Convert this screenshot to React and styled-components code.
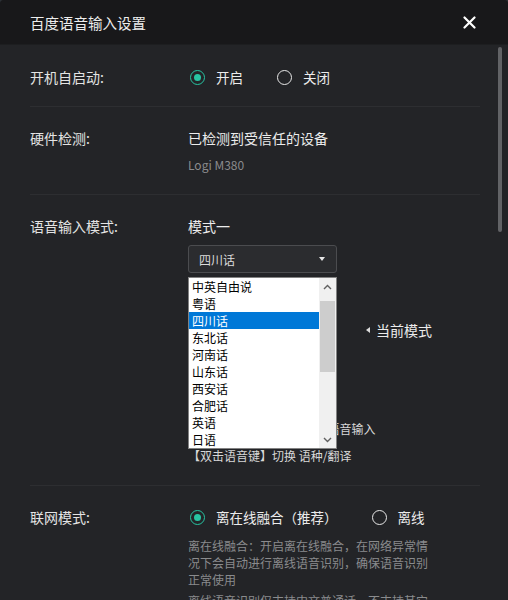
import styled, { createGlobalStyle } from "styled-components";

const GlobalStyle = createGlobalStyle`
  html, body {
    margin: 0;
    padding: 0;
    background: #2b3035;
  }
  body {
    font-family: "Noto Sans CJK SC", "Noto Sans", sans-serif;
  }
`;

const Window = styled.div`
  position: relative;
  width: 508px;
  height: 600px;
  background: #232427;
  border-radius: 4px 4px 0 0;
  overflow: hidden;
  display: flex;
  flex-direction: column;
`;

const TitleBar = styled.div`
  flex-shrink: 0;
  height: 45px;
  box-sizing: border-box;
  padding: 0 32px 0 30px;
  display: flex;
  align-items: center;
  justify-content: space-between;
  background: #18181a;
  border-bottom: 1px solid #1d1e20;
  color: #ededed;
  font-size: 14.5px;
`;

const CloseButton = styled.button`
  border: 0;
  padding: 0;
  background: none;
  display: flex;
  cursor: pointer;
`;

const Content = styled.div`
  position: relative;
  padding: 0 28px 0 30px;
`;

const ScrollThumb = styled.div`
  position: absolute;
  right: 6px;
  top: 2px;
  width: 4px;
  height: 185px;
  border-radius: 2px;
  background: #626366;
`;

const Section = styled.div`
  display: grid;
  grid-template-columns: 158px 1fr;
  padding: ${(p) => p.$top || 21}px 0 19px;
  border-bottom: ${(p) => (p.$last ? "none" : "1px solid #2d2e31")};
`;

const Label = styled.div`
  font-size: 14px;
  line-height: 20px;
  color: #e4e4e4;
`;

const Value = styled.div`
  display: flex;
  flex-direction: column;
  align-items: flex-start;
`;

const MainText = styled.div`
  font-size: 14px;
  line-height: 20px;
  color: #ececec;
`;

const SubText = styled.div`
  font-size: 12px;
  line-height: 20px;
  margin-top: 7px;
  color: #8a8b8d;
`;

const RadioGroup = styled.div`
  display: flex;
  align-items: center;
  gap: 32px;
  height: 20px;
`;

const Option = styled.label`
  display: flex;
  align-items: center;
  gap: 11px;
  font-size: 13.5px;
  line-height: 20px;
  color: #ececec;
`;

const Circle = styled.span`
  box-sizing: border-box;
  width: 15px;
  height: 15px;
  margin-left: 2px;
  border-radius: 50%;
  border: 1.5px solid ${(p) => (p.$on ? "#27c4a2" : "#e8e8e8")};
  display: flex;
  align-items: center;
  justify-content: center;

  &::after {
    content: "";
    width: 7px;
    height: 7px;
    border-radius: 50%;
    background: ${(p) => (p.$on ? "#27c4a2" : "transparent")};
  }
`;

const SelectWrap = styled.div`
  position: relative;
  display: flex;
  align-items: center;
  margin-top: ${(p) => p.$gap || 0}px;
`;

const Select = styled.div`
  box-sizing: border-box;
  width: 149px;
  height: 28px;
  padding: 0 10px;
  display: flex;
  align-items: center;
  justify-content: space-between;
  background: #2b2c2f;
  border: 1px solid #4b4c4f;
  border-radius: 3px;
  font-size: 12px;
  color: #dcdcdc;
`;

const Caret = styled.span`
  width: 0;
  height: 0;
  margin-right: 1px;
  border-left: 3px solid transparent;
  border-right: 3px solid transparent;
  border-top: 4px solid #e6e6e6;
`;

const CurrentTag = styled.span`
  display: flex;
  align-items: center;
  gap: 6px;
  margin-left: 29px;
  font-size: 14px;
  color: #ececec;

  &::before {
    content: "";
    border-top: 3px solid transparent;
    border-bottom: 3px solid transparent;
    border-right: 4px solid #dcdcdc;
  }
`;

const ModeTitle = styled(MainText)`
  margin-top: ${(p) => p.$gap || 0}px;
`;

const Hints = styled.div`
  display: flex;
  flex-direction: column;
  gap: 7px;
  margin-top: 75px;
`;

const Hint = styled.div`
  font-size: 12px;
  line-height: 20px;
  color: #d8d8d8;
  white-space: nowrap;
`;

const ListBox = styled.div`
  position: absolute;
  left: 0;
  top: 32px;
  z-index: 5;
  box-sizing: border-box;
  width: 149px;
  height: 172px;
  display: flex;
  background: #ffffff;
  border: 1px solid #828282;
`;

const Items = styled.div`
  flex: 1;
  display: flex;
  flex-direction: column;
`;

const Item = styled.div`
  height: 17px;
  line-height: 17px;
  padding-left: 3px;
  font-size: 12px;
  color: ${(p) => (p.$active ? "#ffffff" : "#000000")};
  background: ${(p) => (p.$active ? "#0078d7" : "transparent")};
`;

const ListScroll = styled.div`
  width: 17px;
  display: flex;
  flex-direction: column;
  align-items: center;
  background: #f0f0f0;
`;

const ScrollArrow = styled.div`
  height: 17px;
  display: flex;
  align-items: center;
  justify-content: center;
`;

const ListThumb = styled.div`
  width: 15px;
  height: 71px;
  margin-top: 6px;
  background: #cdcdcd;
`;

const Track = styled.div`
  flex: 1;
`;

const Desc = styled.div`
  width: 246px;
  margin-top: ${(p) => p.$gap}px;
  font-size: 12px;
  line-height: 17px;
  color: #8a8b8d;
`;

const Chevron = ({ up }) => (
  <svg width="9" height="6" viewBox="0 0 9 6">
    <path
      d={up ? "M1 5 L4.5 1.5 L8 5" : "M1 1 L4.5 4.5 L8 1"}
      fill="none"
      stroke="#606060"
      strokeWidth="1.4"
    />
  </svg>
);

const Radio = ({ on, children }) => (
  <Option>
    <Circle $on={on} />
    {children}
  </Option>
);

const dialects = ["中英自由说", "粤语", "四川话", "东北话", "河南话", "山东话", "西安话", "合肥话", "英语", "日语"];

export default function App() {
  return (
    <Window>
      <GlobalStyle />
      <TitleBar>
        <span>百度语音输入设置</span>
        <CloseButton aria-label="关闭">
          <svg width="13" height="13" viewBox="0 0 13 13">
            <path d="M1.5 1.5 L11.5 11.5 M11.5 1.5 L1.5 11.5" stroke="#ffffff" strokeWidth="2.2" strokeLinecap="round" />
          </svg>
        </CloseButton>
      </TitleBar>
      <Content>
        <ScrollThumb />
        <Section $top={22}>
          <Label>开机自启动:</Label>
          <RadioGroup>
            <Radio on>开启</Radio>
            <Radio>关闭</Radio>
          </RadioGroup>
        </Section>

        <Section>
          <Label>硬件检测:</Label>
          <Value>
            <MainText>已检测到受信任的设备</MainText>
            <SubText>Logi M380</SubText>
          </Value>
        </Section>

        <Section>
          <Label>语音输入模式:</Label>
          <Value>
            <ModeTitle>模式一</ModeTitle>
            <SelectWrap $gap={9}>
              <Select>
                四川话
                <Caret />
              </Select>
              <ListBox>
                <Items>
                  {dialects.map((d) => (
                    <Item key={d} $active={d === "四川话"}>
                      {d}
                    </Item>
                  ))}
                </Items>
                <ListScroll>
                  <ScrollArrow>
                    <Chevron up />
                  </ScrollArrow>
                  <ListThumb />
                  <Track />
                  <ScrollArrow>
                    <Chevron />
                  </ScrollArrow>
                </ListScroll>
              </ListBox>
            </SelectWrap>
            <ModeTitle $gap={14}>模式二</ModeTitle>
            <SelectWrap $gap={9}>
              <Select>
                中英自由说
                <Caret />
              </Select>
              <CurrentTag>当前模式</CurrentTag>
            </SelectWrap>
            <Hints>
              <Hint>【单击语音键】开始/结束 语音输入</Hint>
              <Hint>【双击语音键】切换 语种/翻译</Hint>
            </Hints>
          </Value>
        </Section>

        <Section $last>
          <Label>联网模式:</Label>
          <Value>
            <RadioGroup>
              <Radio on>离在线融合（推荐）</Radio>
              <Radio>离线</Radio>
            </RadioGroup>
            <Desc $gap={9.5}>
              离在线融合：开启离在线融合，在网络异常情况下会自动进行离线语音识别，确保语音识别正常使用
            </Desc>
            <Desc $gap={4}>
              离线语音识别仅支持中文普通话，不支持其它语种及方言识别
            </Desc>
          </Value>
        </Section>
      </Content>
    </Window>
  );
}
